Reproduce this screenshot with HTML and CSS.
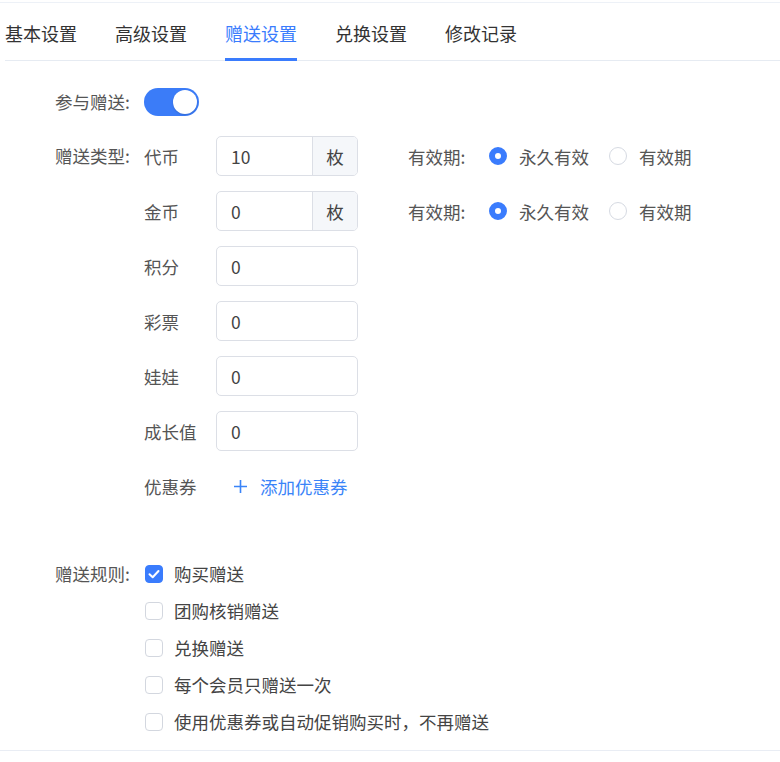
FILE: index.html
```html
<!DOCTYPE html>
<html lang="zh-CN">
<head>
<meta charset="utf-8">
<title>赠送设置</title>
<link rel="stylesheet" href="styles.css">
</head>
<body>
<div class="page">
  <header class="header">
    <nav class="tabs">
      <a class="tab">基本设置</a>
      <a class="tab">高级设置</a>
      <a class="tab active">赠送设置</a>
      <a class="tab">兑换设置</a>
      <a class="tab">修改记录</a>
    </nav>
  </header>
  <form class="form">
    <div class="row row-switch">
      <span class="label">参与赠送:</span>
      <span class="switch on"><span class="knob"></span></span>
    </div>
    <div class="row row-types">
      <span class="label label-40">赠送类型:</span>
      <div class="types">
        <div class="type">
          <span class="type-name">代币</span>
          <div class="input group"><span class="value">10</span><span class="suffix">枚</span></div>
          <div class="validity">
            <span class="v-label">有效期:</span>
            <span class="radio checked"></span><span class="r-text">永久有效</span>
            <span class="radio"></span><span class="r-text">有效期</span>
          </div>
        </div>
        <div class="type">
          <span class="type-name">金币</span>
          <div class="input group"><span class="value">0</span><span class="suffix">枚</span></div>
          <div class="validity">
            <span class="v-label">有效期:</span>
            <span class="radio checked"></span><span class="r-text">永久有效</span>
            <span class="radio"></span><span class="r-text">有效期</span>
          </div>
        </div>
        <div class="type">
          <span class="type-name">积分</span>
          <div class="input"><span class="value">0</span></div>
        </div>
        <div class="type">
          <span class="type-name">彩票</span>
          <div class="input"><span class="value">0</span></div>
        </div>
        <div class="type">
          <span class="type-name">娃娃</span>
          <div class="input"><span class="value">0</span></div>
        </div>
        <div class="type">
          <span class="type-name">成长值</span>
          <div class="input"><span class="value">0</span></div>
        </div>
        <div class="type">
          <span class="type-name">优惠券</span>
          <a class="add-link">
            <svg class="plus" width="15" height="15" viewBox="0 0 15 15"><path d="M7.5 1v13M1 7.5h13" stroke="currentColor" stroke-width="1.6" fill="none"/></svg>
            <span>添加优惠券</span>
          </a>
        </div>
      </div>
    </div>
    <div class="row row-rules">
      <span class="label label-37">赠送规则:</span>
      <div class="rules">
        <label class="rule"><span class="checkbox checked"><svg width="18" height="18" viewBox="0 0 18 18"><path d="M4.5 9.2l3.2 3.1 5.8-6.3" stroke="#fff" stroke-width="2" fill="none" stroke-linecap="round" stroke-linejoin="round"/></svg></span><span>购买赠送</span></label>
        <label class="rule"><span class="checkbox"></span><span>团购核销赠送</span></label>
        <label class="rule"><span class="checkbox"></span><span>兑换赠送</span></label>
        <label class="rule"><span class="checkbox"></span><span>每个会员只赠送一次</span></label>
        <label class="rule"><span class="checkbox"></span><span>使用优惠券或自动促销购买时，不再赠送</span></label>
      </div>
    </div>
  </form>
</div>
</body>
</html>
```
FILE: styles.css
```css
* { box-sizing: border-box; }
html, body { margin: 0; padding: 0; background: #fff; }
body {
  font-family: "Noto Sans CJK SC", "Noto Sans", sans-serif;
  color: #555;
  font-size: 17.5px;
}
.page { width: 780px; padding-top: 2px; }

.header { border-top: 1px solid #edf1f7; }
.tabs {
  margin-left: 5px;
  display: flex;
  gap: 38px;
  border-bottom: 1px solid #e6ebf2;
}
.tab {
  position: relative;
  display: block;
  font-size: 18px;
  line-height: 54px;
  height: 57px;
  padding-top: 3px;
  color: #333;
  cursor: pointer;
}
.tab.active { color: #3a7cfd; }
.tab.active::after {
  content: "";
  position: absolute;
  left: 0;
  right: 0;
  bottom: -1px;
  height: 3px;
  background: #3a7cfd;
}

.form {
  padding: 27px 0 10px 55px;
  border-bottom: 1px solid #e9edf4;
}
.row { display: flex; align-items: flex-start; }
.label {
  width: 89px;
  flex: none;
  line-height: 28px;
  color: #555;
}
.label-40 { line-height: 40px; }
.label-37 { line-height: 37px; }

.switch {
  width: 55px;
  height: 28px;
  border-radius: 14px;
  background: #3b7cf8;
  display: flex;
  align-items: center;
  justify-content: flex-end;
  padding-right: 2px;
}
.knob {
  width: 24px;
  height: 24px;
  border-radius: 50%;
  background: #fff;
  box-shadow: 0 1px 2px rgba(0,0,0,0.15);
}

.row-types { margin-top: 20px; }
.types { display: flex; flex-direction: column; gap: 15px; }
.type { display: flex; align-items: center; height: 40px; }
.type-name { width: 72px; flex: none; color: #555; }

.input {
  width: 142px;
  height: 40px;
  border: 1px solid #dcdfe6;
  border-radius: 5px;
  display: flex;
  align-items: center;
  overflow: hidden;
  color: #444;
}
.input .value { flex: 1; padding-left: 14px; }
.input .suffix {
  width: 45px;
  height: 100%;
  flex: none;
  background: #f5f7fa;
  border-left: 1px solid #dcdfe6;
  display: flex;
  align-items: center;
  justify-content: center;
  color: #444;
}

.validity { display: flex; align-items: center; margin-left: 50px; }
.v-label { width: 81px; }
.radio {
  width: 18px;
  height: 18px;
  border-radius: 50%;
  border: 1px solid #d6dae2;
  background: #fff;
  flex: none;
}
.radio.checked {
  border: 6px solid #3a7cfd;
  background: #fff;
}
.r-text { margin-left: 12px; margin-right: 20px; }

.add-link {
  display: flex;
  align-items: center;
  gap: 12px;
  margin-left: 17px;
  color: #3a84f8;
  cursor: pointer;
}
.plus { display: block; }

.row-rules { margin-top: 49px; }
.rules { display: flex; flex-direction: column; }
.rule {
  display: flex;
  align-items: center;
  height: 37px;
  color: #444;
}
.checkbox {
  width: 18px;
  height: 18px;
  margin-left: 1px;
  margin-right: 11px;
  border: 1px solid #d3d7df;
  border-radius: 4px;
  background: #fff;
  flex: none;
  display: flex;
  align-items: center;
  justify-content: center;
}
.checkbox.checked { background: #3a7cfd; border-color: #3a7cfd; }
.checkbox svg { display: block; flex: none; }
```
